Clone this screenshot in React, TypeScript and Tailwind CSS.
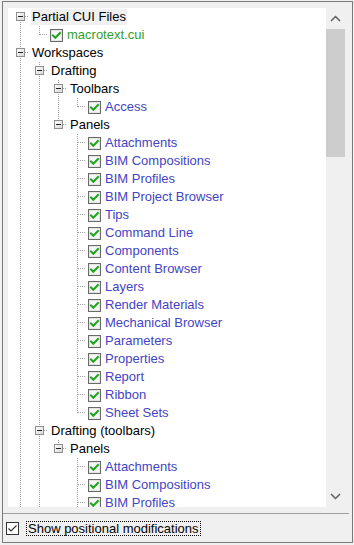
import React from "react";

type Row = {
  level: number;
  kind: "exp" | "leaf";
  text: string;
  color?: string;
  next: boolean;
  anc: boolean[];
  first?: boolean;
  hl?: boolean;
};

const BLUE = "#4444c4";
const GREEN = "#30a030";
const LINE = "#a0a0a0";

const panelsA = [
  "Attachments",
  "BIM Compositions",
  "BIM Profiles",
  "BIM Project Browser",
  "Tips",
  "Command Line",
  "Components",
  "Content Browser",
  "Layers",
  "Render Materials",
  "Mechanical Browser",
  "Parameters",
  "Properties",
  "Report",
  "Ribbon",
  "Sheet Sets",
];
const panelsB = ["Attachments", "BIM Compositions", "BIM Profiles"];

const rows: Row[] = [
  { level: 0, kind: "exp", text: "Partial CUI Files", next: true, anc: [], first: true, hl: true },
  { level: 1, kind: "leaf", text: "macrotext.cui", color: GREEN, next: false, anc: [true] },
  { level: 0, kind: "exp", text: "Workspaces", next: true, anc: [] },
  { level: 1, kind: "exp", text: "Drafting", next: true, anc: [true] },
  { level: 2, kind: "exp", text: "Toolbars", next: true, anc: [true, true] },
  { level: 3, kind: "leaf", text: "Access", color: BLUE, next: false, anc: [true, true, true] },
  { level: 2, kind: "exp", text: "Panels", next: false, anc: [true, true] },
  ...panelsA.map((t, i) => ({
    level: 3,
    kind: "leaf" as const,
    text: t,
    color: BLUE,
    next: i < panelsA.length - 1,
    anc: [true, true, false],
  })),
  { level: 1, kind: "exp", text: "Drafting (toolbars)", next: true, anc: [true] },
  { level: 2, kind: "exp", text: "Panels", next: false, anc: [true, true] },
  ...panelsB.map((t) => ({
    level: 3,
    kind: "leaf" as const,
    text: t,
    color: BLUE,
    next: true,
    anc: [true, true, false],
  })),
];

function Cell({
  mode,
  first,
  next,
  exp,
  id,
}: {
  mode: "pass" | "none" | "own";
  first?: boolean;
  next?: boolean;
  exp?: boolean;
  id?: string;
}) {
  return (
    <svg width="19" height="18" className="block shrink-0">
      {mode === "pass" && (
        <line x1="10.5" y1="0" x2="10.5" y2="18" stroke={LINE} strokeDasharray="1 1" />
      )}
      {mode === "own" && (
        <>
          <line
            x1="10.5"
            y1={first ? 8 : 0}
            x2="10.5"
            y2={next ? 18 : 9}
            stroke={LINE}
            strokeDasharray="1 1"
          />
          <line x1="11" y1="8.5" x2="19" y2="8.5" stroke={LINE} strokeDasharray="1 1" />
          {exp && (
            <>
              <defs>
                <linearGradient id={id} x1="0" y1="0" x2="1" y2="1">
                  <stop offset="0" stopColor="#ffffff" />
                  <stop offset="1" stopColor="#d6d6d6" />
                </linearGradient>
              </defs>
              <rect x="6.5" y="4.5" width="8" height="8" fill={`url(#${id})`} stroke="#8e8f8f" />
              <line x1="8" y1="8.5" x2="13" y2="8.5" stroke="#222" />
            </>
          )}
        </>
      )}
    </svg>
  );
}

function TreeCheck() {
  return (
    <svg width="13" height="13" className="block shrink-0 ml-[2px]">
      <rect x="0.5" y="0.5" width="12" height="12" fill="#f6f6f6" stroke="#6a6a6a" />
      <rect x="1.5" y="1.5" width="10" height="10" fill="none" stroke="#e4e4e4" />
      <polyline
        points="3,6.5 5.3,8.8 10,4"
        fill="none"
        stroke="#1fa51f"
        strokeWidth="2"
        strokeLinecap="square"
      />
    </svg>
  );
}

function TreeRow({ r, idx }: { r: Row; idx: number }) {
  const cells = [] as React.ReactNode[];
  for (let i = 0; i < r.level; i++) {
    cells.push(<Cell key={i} mode={r.anc[i] ? "pass" : "none"} />);
  }
  cells.push(
    <Cell key="own" mode="own" first={r.first} next={r.next} exp={r.kind === "exp"} id={`eg${idx}`} />
  );
  return (
    <div className="flex items-center h-[18px]">
      {cells}
      {r.kind === "leaf" && <TreeCheck />}
      <span
        className={
          "h-[16px] leading-[16px] px-[1px] whitespace-nowrap " +
          (r.kind === "leaf" ? "ml-[3px] " : "ml-[2px] ") +
          (r.hl ? "bg-[#f0f0f0]" : "")
        }
        style={{ color: r.color ?? "#000000" }}
      >
        {r.text}
      </span>
    </div>
  );
}

function Scrollbar() {
  return (
    <div className="w-[19px] flex flex-col bg-[#f0f0f0]">
      <div className="h-[21px] flex items-center justify-center">
        <svg width="11" height="7" className="block">
          <polyline points="1,6 5.5,1.5 10,6" fill="none" stroke="#606060" strokeWidth="1.5" />
        </svg>
      </div>
      <div className="h-[128px] bg-[#cdcdcd]" />
      <div className="flex-1" />
      <div className="h-[21px] flex items-center justify-center">
        <svg width="11" height="7" className="block">
          <polyline points="1,1 5.5,5.5 10,1" fill="none" stroke="#606060" strokeWidth="1.5" />
        </svg>
      </div>
    </div>
  );
}

export default function App() {
  return (
    <div className="w-[354px] h-[545px] bg-[#f0f0f0] pl-[2px] pt-[1px] font-['Liberation_Sans',Arial,sans-serif] text-[13px] text-black overflow-hidden">
      <div className="w-[351px] h-[542px] border border-[#7a7a7a] flex flex-col">
        <div className="pl-[5px] pr-[7px] pt-[6px]">
          <div className="flex h-[499px]">
            <div className="w-[318px] bg-white overflow-hidden pl-[2px]">
              {rows.map((r, i) => (
                <TreeRow key={i} r={r} idx={i} />
              ))}
            </div>
            <Scrollbar />
          </div>
        </div>
        <div className="mt-[6px] h-px bg-[#a0a0a0] mr-[3px]" />
        <div className="flex-1 flex items-center pl-[3px]">
          <svg width="13" height="13" className="block shrink-0">
            <rect x="0.5" y="0.5" width="12" height="12" fill="#ffffff" stroke="#333333" />
            <polyline points="2.5,6.5 5,9 10.5,3.5" fill="none" stroke="#333333" strokeWidth="1.2" />
          </svg>
          <span className="ml-[7px] border border-dotted border-black px-[1px] h-[15px] leading-[13px] whitespace-nowrap">
            Show positional modifications
          </span>
        </div>
      </div>
    </div>
  );
}
